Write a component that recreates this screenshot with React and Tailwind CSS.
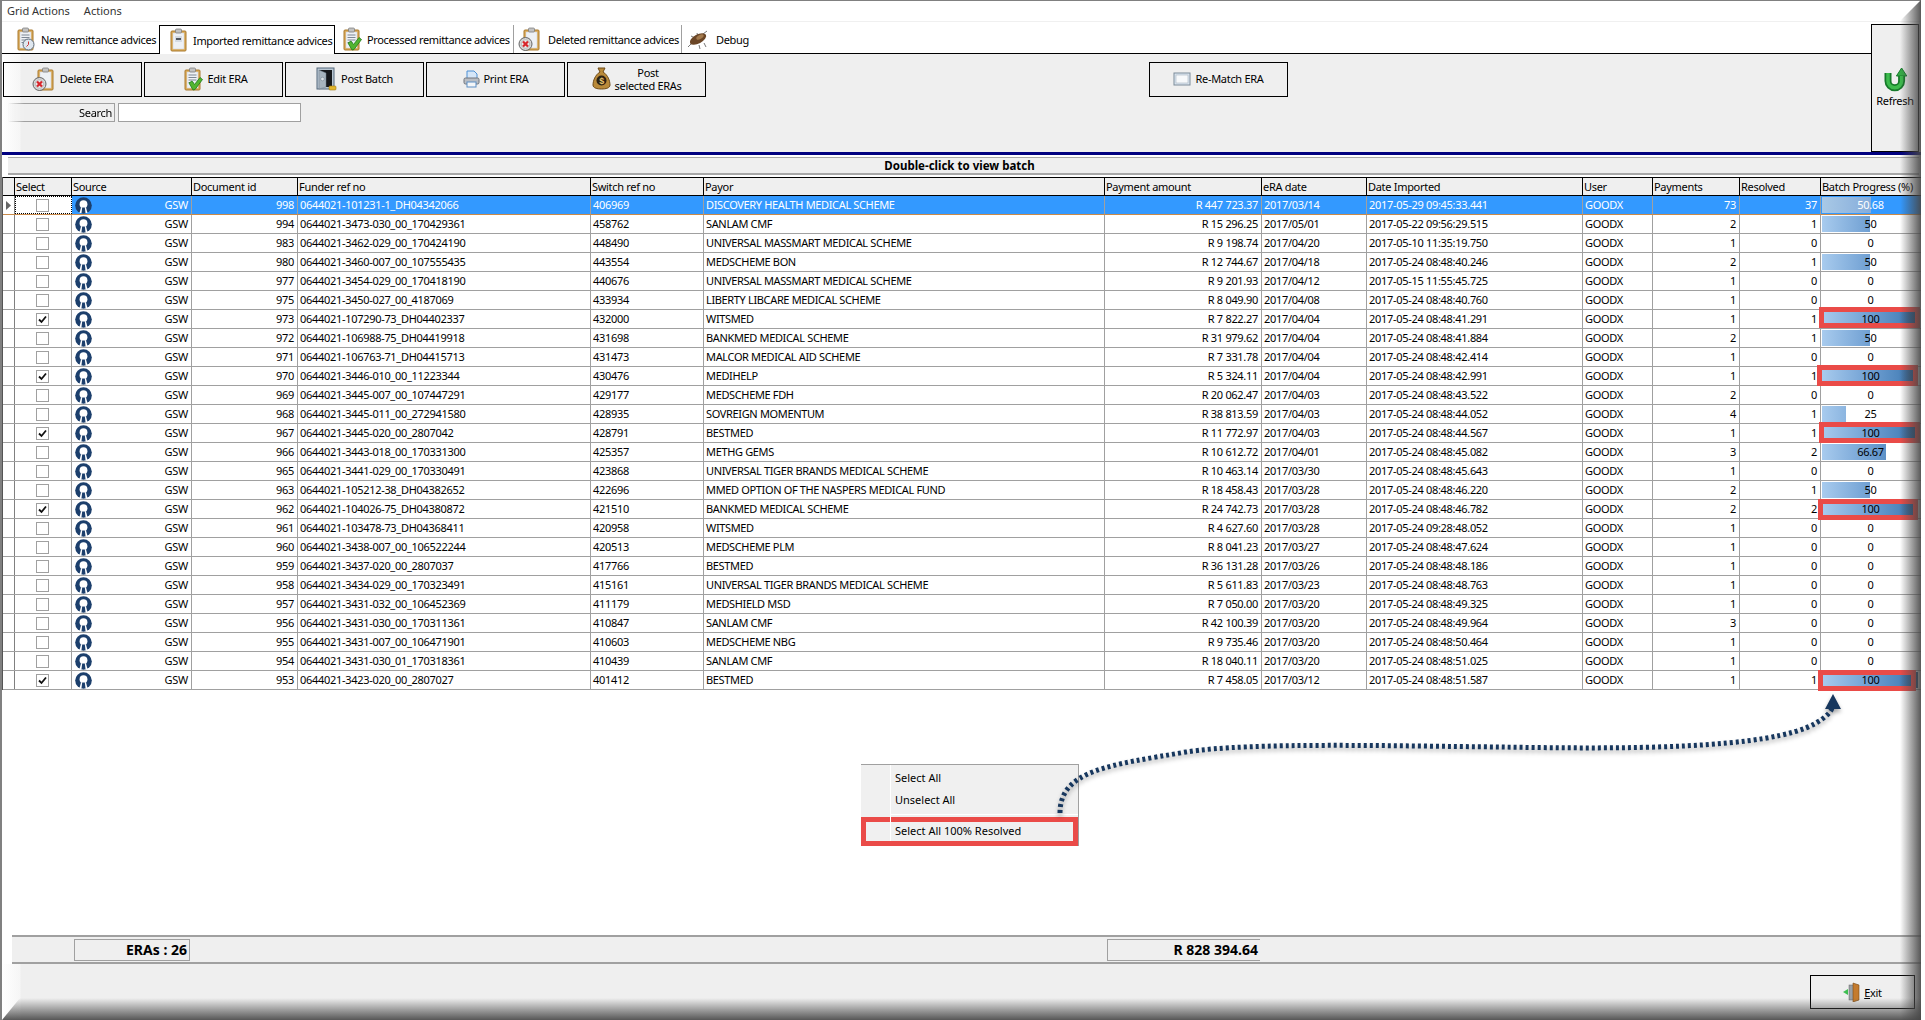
import React from "react";

const rows = [
  [998, "0644021-101231-1_DH04342066", 406969, "DISCOVERY HEALTH MEDICAL SCHEME", "R 447 723.37", "2017/03/14", "2017-05-29 09:45:33.441", 73, 37, 50.68],
  [994, "0644021-3473-030_00_170429361", 458762, "SANLAM CMF", "R 15 296.25", "2017/05/01", "2017-05-22 09:56:29.515", 2, 1, 50],
  [983, "0644021-3462-029_00_170424190", 448490, "UNIVERSAL MASSMART MEDICAL SCHEME", "R 9 198.74", "2017/04/20", "2017-05-10 11:35:19.750", 1, 0, 0],
  [980, "0644021-3460-007_00_107555435", 443554, "MEDSCHEME BON", "R 12 744.67", "2017/04/18", "2017-05-24 08:48:40.246", 2, 1, 50],
  [977, "0644021-3454-029_00_170418190", 440676, "UNIVERSAL MASSMART MEDICAL SCHEME", "R 9 201.93", "2017/04/12", "2017-05-15 11:55:45.725", 1, 0, 0],
  [975, "0644021-3450-027_00_4187069", 433934, "LIBERTY LIBCARE MEDICAL SCHEME", "R 8 049.90", "2017/04/08", "2017-05-24 08:48:40.760", 1, 0, 0],
  [973, "0644021-107290-73_DH04402337", 432000, "WITSMED", "R 7 822.27", "2017/04/04", "2017-05-24 08:48:41.291", 1, 1, 100],
  [972, "0644021-106988-75_DH04419918", 431698, "BANKMED MEDICAL SCHEME", "R 31 979.62", "2017/04/04", "2017-05-24 08:48:41.884", 2, 1, 50],
  [971, "0644021-106763-71_DH04415713", 431473, "MALCOR MEDICAL AID SCHEME", "R 7 331.78", "2017/04/04", "2017-05-24 08:48:42.414", 1, 0, 0],
  [970, "0644021-3446-010_00_11223344", 430476, "MEDIHELP", "R 5 324.11", "2017/04/04", "2017-05-24 08:48:42.991", 1, 1, 100],
  [969, "0644021-3445-007_00_107447291", 429177, "MEDSCHEME FDH", "R 20 062.47", "2017/04/03", "2017-05-24 08:48:43.522", 2, 0, 0],
  [968, "0644021-3445-011_00_272941580", 428935, "SOVREIGN MOMENTUM", "R 38 813.59", "2017/04/03", "2017-05-24 08:48:44.052", 4, 1, 25],
  [967, "0644021-3445-020_00_2807042", 428791, "BESTMED", "R 11 772.97", "2017/04/03", "2017-05-24 08:48:44.567", 1, 1, 100],
  [966, "0644021-3443-018_00_170331300", 425357, "METHG GEMS", "R 10 612.72", "2017/04/01", "2017-05-24 08:48:45.082", 3, 2, 66.67],
  [965, "0644021-3441-029_00_170330491", 423868, "UNIVERSAL TIGER BRANDS MEDICAL SCHEME", "R 10 463.14", "2017/03/30", "2017-05-24 08:48:45.643", 1, 0, 0],
  [963, "0644021-105212-38_DH04382652", 422696, "MMED OPTION OF THE NASPERS MEDICAL FUND", "R 18 458.43", "2017/03/28", "2017-05-24 08:48:46.220", 2, 1, 50],
  [962, "0644021-104026-75_DH04380872", 421510, "BANKMED MEDICAL SCHEME", "R 24 742.73", "2017/03/28", "2017-05-24 08:48:46.782", 2, 2, 100],
  [961, "0644021-103478-73_DH04368411", 420958, "WITSMED", "R 4 627.60", "2017/03/28", "2017-05-24 09:28:48.052", 1, 0, 0],
  [960, "0644021-3438-007_00_106522244", 420513, "MEDSCHEME PLM", "R 8 041.23", "2017/03/27", "2017-05-24 08:48:47.624", 1, 0, 0],
  [959, "0644021-3437-020_00_2807037", 417766, "BESTMED", "R 36 131.28", "2017/03/26", "2017-05-24 08:48:48.186", 1, 0, 0],
  [958, "0644021-3434-029_00_170323491", 415161, "UNIVERSAL TIGER BRANDS MEDICAL SCHEME", "R 5 611.83", "2017/03/23", "2017-05-24 08:48:48.763", 1, 0, 0],
  [957, "0644021-3431-032_00_106452369", 411179, "MEDSHIELD MSD", "R 7 050.00", "2017/03/20", "2017-05-24 08:48:49.325", 1, 0, 0],
  [956, "0644021-3431-030_00_170311361", 410847, "SANLAM CMF", "R 42 100.39", "2017/03/20", "2017-05-24 08:48:49.964", 3, 0, 0],
  [955, "0644021-3431-007_00_106471901", 410603, "MEDSCHEME NBG", "R 9 735.46", "2017/03/20", "2017-05-24 08:48:50.464", 1, 0, 0],
  [954, "0644021-3431-030_01_170318361", 410439, "SANLAM CMF", "R 18 040.11", "2017/03/20", "2017-05-24 08:48:51.025", 1, 0, 0],
  [953, "0644021-3423-020_00_2807027", 401412, "BESTMED", "R 7 458.05", "2017/03/12", "2017-05-24 08:48:51.587", 1, 1, 100],
];

const gridCols =
  "grid grid-cols-[12px_57px_120px_106px_293px_113px_401px_157px_105px_216px_70px_87px_81px_99px]";

const headers = ["", "Select", "Source", "Document id", "Funder ref no", "Switch ref no", "Payor", "Payment amount", "eRA date", "Date Imported", "User", "Payments", "Resolved", "Batch Progress (%)"];

const Clipboard = ({ size = 24, children }) => (
  <svg width={size} height={size} viewBox="0 0 24 24" className="shrink-0">
    <rect x="6" y="3" width="15" height="20" rx="1" fill="#dcab57" stroke="#a97b31" />
    <rect x="8" y="5" width="11" height="16" fill="#eef1f5" stroke="#c9ced6" strokeWidth="0.5" />
    <rect x="10.5" y="1" width="6" height="4" rx="1" fill="#c2c2c2" stroke="#777" strokeWidth="0.7" />
    {children}
  </svg>
);

const Lines = () => (
  <g stroke="#7d8794" strokeWidth="1">
    <path d="M9.5 8h8M9.5 10.5h8M9.5 13h8M9.5 15.5h5" />
  </g>
);

const Tick = () => (
  <path d="M10 16l3-2 2.5 3.5L21 10.5l2.5 2-7.5 10-2 .5z" fill="#52b52f" stroke="#1d7a1a" strokeWidth="0.8" />
);

const DeleteBadge = () => (
  <g>
    <circle cx="7.5" cy="17" r="6.5" fill="#d6d6d6" stroke="#666" />
    <circle cx="7.5" cy="17" r="4.2" fill="#e9e9e9" stroke="#999" strokeWidth="0.5" />
    <path d="M5 14.5l5 5M10 14.5l-5 5" stroke="#d8262c" strokeWidth="2.2" />
  </g>
);

const TabNewIcon = () => (
  <Clipboard>
    <Lines />
    <circle cx="16.5" cy="17.5" r="5.5" fill="#dfe7ef" stroke="#5d6b7a" />
    <path d="M16.5 14.5v3l-2 2" stroke="#c33" strokeWidth="1" fill="none" />
  </Clipboard>
);

const TabOkIcon = () => (
  <Clipboard>
    <rect x="10" y="8" width="7" height="6" fill="#d5dbe3" />
    <rect x="11" y="10" width="5" height="2" fill="#50565f" />
  </Clipboard>
);

const CheckClipboard = () => (
  <Clipboard>
    <Lines />
    <Tick />
  </Clipboard>
);

const DeleteClipboard = () => (
  <Clipboard>
    <DeleteBadge />
  </Clipboard>
);

const BugIcon = () => (
  <svg width="24" height="22" viewBox="0 0 24 22" className="shrink-0">
    <path d="M2 19L7 14M5 8l4 2M11 5l1 4M18 15l2 4M13 17l1 4M21 3l-4 3" stroke="#777" strokeWidth="1" fill="none" />
    <ellipse cx="12" cy="11" rx="9" ry="4.5" transform="rotate(-28 12 11)" fill="#6b4626" />
    <ellipse cx="14" cy="9" rx="4" ry="2" transform="rotate(-28 14 9)" fill="#a37a4d" />
  </svg>
);

const SafeIcon = () => (
  <svg width="21" height="24" viewBox="0 0 21 24" className="shrink-0">
    <rect x="1" y="1" width="17" height="21" fill="#b8c6d2" stroke="#55697c" />
    <rect x="3" y="3" width="13" height="17" fill="#16181c" />
    <path d="M3 3l7 3v14l-7 2z" fill="#a7b4bf" stroke="#6c7b88" strokeWidth="0.5" />
    <circle cx="6.5" cy="12" r="1.8" fill="#dfe5ea" stroke="#6c7b88" strokeWidth="0.5" />
    <rect x="13" y="19" width="7" height="4" rx="1" fill="#e3b62c" stroke="#9d7a14" strokeWidth="0.6" />
  </svg>
);

const PrinterIcon = () => (
  <svg width="17" height="18" viewBox="0 0 17 18" className="shrink-0">
    <path d="M4 1h7l3 3v6H4z" fill="#d5e6f8" stroke="#4d8fd4" />
    <rect x="1" y="8" width="15" height="6" rx="1.5" fill="#b9bdc3" stroke="#70757c" />
    <rect x="4" y="12" width="9" height="5" fill="#f4f6f8" stroke="#5d8fc6" />
  </svg>
);

const MoneyBagIcon = () => (
  <svg width="19" height="23" viewBox="0 0 19 23" className="shrink-0">
    <path d="M6 1l7 0-2 4c5 3 7 9 7 13 0 3-4 4-8.500 4S1 21 1 18c0-4 2-10 7-13z" fill="#b98a3a" stroke="#6e4a17" />
    <circle cx="9.500" cy="13.500" r="5" fill="#2b2114" />
    <text x="9.500" y="17" textAnchor="middle" fontSize="9" fontWeight="700" fill="#e8c36c" fontFamily="Liberation Sans, sans-serif">$</text>
  </svg>
);

const RematchIcon = () => (
  <svg width="18" height="14" viewBox="0 0 18 14" className="shrink-0">
    <rect x="1" y="1" width="16" height="12" fill="#dbe6f0" stroke="#7d8b99" />
    <rect x="3" y="3" width="12" height="8" fill="#f7f9fb" stroke="#a7b3bf" strokeWidth="0.6" />
  </svg>
);

const RefreshIcon = () => (
  <svg width="24" height="24" viewBox="0 0 24 24">
    <path d="M5 5v8a6.800 6.800 0 0 0 13.600 0V8" fill="none" stroke="#167a2a" strokeWidth="7" />
    <path d="M18.600 0l5.200 8H13.400z" fill="#35ad47" stroke="#167a2a" strokeWidth="1" />
    <path d="M5 5v8a6.800 6.800 0 0 0 13.600 0V8" fill="none" stroke="#3dbb4d" strokeWidth="3.500" />
  </svg>
);

const ExitIcon = () => (
  <svg width="19" height="20" viewBox="0 0 19 20" className="shrink-0">
    <path d="M0 10l5-3v6z" fill="#3fbf52" />
    <rect x="6" y="3" width="9" height="15" fill="#9aa0a6" stroke="#666" strokeWidth="0.5" />
    <path d="M10 1l6 2v15l-6 2z" fill="#c47b2e" stroke="#7a4b16" strokeWidth="0.6" />
  </svg>
);

const SourceIcon = () => (
  <svg width="17" height="17" viewBox="0 0 17 17">
    <circle cx="8.500" cy="8.500" r="8.300" fill="#1c3f6c" />
    <circle cx="8.500" cy="7.200" r="3.900" fill="#fff" />
    <path d="M6 10.500h5l1.500 5.500h-8z" fill="#fff" />
    <path d="M7.200 10.500h2.600l.7 5.500H6.500z" fill="#1c3f6c" />
  </svg>
);

const Tab = ({ icon, label, className, active }) => (
  <div
    className={`flex items-center shrink-0 ${className} ${
      active ? "h-[29px] -mb-px border border-b-0 border-black bg-white" : "h-[28px]"
    }`}
  >
    {icon}
    <span className="whitespace-nowrap tracking-[-0.35px]">{label}</span>
  </div>
);

const ToolButton = ({ icon, children, className = "" }) => (
  <div className={`flex w-[139px] h-[35px] shrink-0 items-center justify-center gap-[4px] border border-black pb-[2px] ${className}`}>
    {icon}
    <span className="text-center leading-[13px]">{children}</span>
  </div>
);

const Cell = ({ right, children, selected, className = "" }) => (
  <div
    className={`flex items-center overflow-hidden whitespace-nowrap border-r border-[#a0a0a0] pb-[2px] ${
      right ? "justify-end pr-[3px]" : "pl-[2px]"
    } ${selected ? "text-white" : ""} ${className}`}
  >
    {children}
  </div>
);

const ProgressCell = ({ value, selected }) => (
  <div className={`grid items-center justify-items-center ${selected ? "text-white" : ""}`}>
    <div className="col-start-1 row-start-1 justify-self-start ml-[1px] h-[16px] w-[96px] overflow-hidden">
      <div className="h-full overflow-hidden" style={{ width: `${value}%` }}>
        <div
          className={`h-full w-[96px] ${
            selected
              ? "bg-[linear-gradient(to_right,#a9c9e6,#86addb_50%,#4f86c4)]"
              : "bg-[linear-gradient(to_right,#a8cbee,#6f9fd2_50%,#4f86bd_80%,#1f4a78)]"
          }`}
        />
      </div>
    </div>
    <span className="col-start-1 row-start-1 relative pb-[2px]">{value}</span>
  </div>
);

const Row = ({ row, index }) => {
  const [id, funder, sw, payor, amount, eraDate, imported, payments, resolved, progress] = row;
  const selected = index === 0;
  const checked = progress === 100;
  return (
    <div
      className={`${gridCols} h-[19px] border-b ${
        selected ? "bg-[#3399ff] border-b-[#c98a4a]" : "border-[#a0a0a0]"
      }`}
    >
      <div className="flex items-center pl-[3px] border-r border-[#808080] bg-white">
        {selected && (
          <svg width="5" height="9" viewBox="0 0 5 9">
            <path d="M0 0l5 4.500L0 9z" fill="#666" />
          </svg>
        )}
      </div>
      <div
        className={`flex items-center justify-center pr-[2px] bg-white ${
          selected ? "border border-dotted border-black" : "border-r border-[#a0a0a0]"
        }`}
      >
        <div className="flex h-[13px] w-[13px] items-center justify-center border border-[#a0a0a0] bg-white">
          {checked && (
            <svg width="9" height="9" viewBox="0 0 9 9">
              <path d="M1 4.500l2.500 2.500L8 1.500" fill="none" stroke="#111" strokeWidth="1.800" />
            </svg>
          )}
        </div>
      </div>
      <div className={`flex items-center justify-between border-r border-[#a0a0a0] pl-[3px] pr-[3px] ${selected ? "text-white" : ""}`}>
        <SourceIcon />
        <span className="pb-[2px]">GSW</span>
      </div>
      <Cell right selected={selected}>{id}</Cell>
      <Cell selected={selected}>{funder}</Cell>
      <Cell selected={selected}>{sw}</Cell>
      <Cell selected={selected} className="tracking-[-0.35px]">{payor}</Cell>
      <Cell right selected={selected}>{amount}</Cell>
      <Cell selected={selected}>{eraDate}</Cell>
      <Cell selected={selected}>{imported}</Cell>
      <Cell selected={selected}>GOODX</Cell>
      <Cell right selected={selected}>{payments}</Cell>
      <Cell right selected={selected}>{resolved}</Cell>
      <ProgressCell value={progress} selected={selected} />
    </div>
  );
};

const RedBox = ({ className }) => (
  <div className={`absolute border-[5px] border-[#ea4b48] ${className}`} />
);

const ContextMenu = () => (
  <div className="absolute left-[861px] top-[764px] flex h-[82px] w-[218px] flex-col border-t border-r border-[#a0a0a0] bg-[#f0f0f0] tracking-normal">
    <div className="flex h-[22px] items-center pl-[34px] pt-[4px]">Select All</div>
    <div className="flex h-[22px] items-center pl-[34px] pt-[4px]">Unselect All</div>
    <div className="ml-[29px] mt-[6px] h-[1px] bg-white" />
    <div className="mt-[2px] flex h-[29px] items-center border-[5px] border-[#ea4b48] pl-[29px] pb-[3px]">
      Select All 100% Resolved
    </div>
    <div className="absolute bottom-[5px] left-[29px] top-0 w-px bg-white" />
  </div>
);

const DottedArrow = () => (
  <svg width="1925" height="1020" viewBox="0 0 1925 1020" className="absolute left-0 top-0 drop-shadow-[0_3px_2px_rgba(0,0,0,0.35)]">
    <path
      d="M1060 813C1060 770 1110 765 1186 752C1250 742 1394 746 1500 747C1620 749 1770 750 1816 723C1826 717 1831 712 1832 708"
      fill="none"
      stroke="#17375e"
      strokeWidth="5"
      strokeDasharray="3 3"
    />
    <path d="M1833 694l8 15h-16z" fill="#17375e" />
  </svg>
);

export default function App() {
  return (
    <div className="relative h-[1020px] w-[1925px] overflow-hidden bg-white font-['Noto_Sans','Liberation_Sans',sans-serif] text-[11px] leading-[13px] tracking-[-0.3px] text-black">
      <div className="flex h-full w-[1921px] flex-col border-l-2 border-t border-[#808080]">
        {/* menu */}
        <div className="flex h-[20px] shrink-0 items-center gap-[14px] pb-[1px] pl-[5px] tracking-normal text-[#333]">
          <span>Grid Actions</span>
          <span>Actions</span>
        </div>
        <div className="h-px shrink-0 bg-[#f0f0f0]" />

        {/* tabs + toolbar with the tall refresh button */}
        <div className="flex h-[130px] shrink-0 pr-[2px]">
          <div className="flex min-w-0 flex-1 flex-col">
            <div className="flex h-[32px] shrink-0 items-end border-b border-black">
              <Tab className="w-[157px] gap-[5px] pl-[10px]" icon={<TabNewIcon />} label="New remittance advices" />
              <Tab active className="w-[176px] gap-[4px] pl-[5px]" icon={<TabOkIcon />} label="Imported remittance advices" />
              <Tab className="w-[179px] gap-[5px] border-r border-[#a0a0a0] pl-[3px]" icon={<CheckClipboard />} label="Processed remittance advices" />
              <Tab className="w-[168px] gap-[6px] border-r border-[#a0a0a0] pl-[4px]" icon={<DeleteClipboard />} label="Deleted remittance advices" />
              <Tab className="w-[70px] gap-[6px] pl-[4px]" icon={<BugIcon />} label="Debug" />
            </div>
            <div className="flex-1 bg-[linear-gradient(to_right,#ffffff,#f6f6f6_18px,#efefef_19px)] pl-px pt-[8px]">
              <div className="flex gap-[2px]">
                <ToolButton icon={<DeleteClipboard />}>Delete ERA</ToolButton>
                <ToolButton icon={<CheckClipboard />}>Edit ERA</ToolButton>
                <ToolButton icon={<SafeIcon />}>Post Batch</ToolButton>
                <ToolButton icon={<PrinterIcon />}>Print ERA</ToolButton>
                <ToolButton icon={<MoneyBagIcon />}>
                  Post
                  <br />
                  selected ERAs
                </ToolButton>
                <ToolButton icon={<RematchIcon />} className="ml-[441px]">Re-Match ERA</ToolButton>
              </div>
              <div className="mt-[6px] flex h-[19px] gap-[3px] pl-[5px]">
                <div className="flex w-[107px] items-center justify-end border border-[#a0a0a0] bg-[#efefef] pb-px pr-[2px] [mask-image:linear-gradient(to_right,transparent,black_16px)]">
                  Search
                </div>
                <div className="w-[183px] border border-[#a0a0a0] bg-white" />
              </div>
            </div>
          </div>
          <div className="flex h-[128px] w-[48px] shrink-0 flex-col items-center justify-center gap-[2px] self-end border border-black bg-[#efefef] pb-[2px]">
            <RefreshIcon />
            <span>Refresh</span>
          </div>
        </div>

        {/* blue divider and caption */}
        <div className="h-[3px] shrink-0 bg-[#000080]" />
        <div className="h-[2px] shrink-0" />
        <div className="ml-[6px] mr-[2px] flex h-[18px] shrink-0 items-center justify-center border-b-2 border-t border-[#a8a8a8] bg-[#efefef] pr-[8px] text-[11.5px] font-bold tracking-normal">
          Double-click to view batch
        </div>
        <div className="h-[2px] shrink-0" />

        {/* grid */}
        <div className="shrink-0 border-l border-[#555]">
          <div className={`${gridCols} h-[19px] border-b border-t border-black bg-[#efefef]`}>
            {headers.map((title, i) => (
              <div key={i} className="flex items-center overflow-hidden whitespace-nowrap border-r border-black pl-px last:border-r-0">
                {title}
              </div>
            ))}
          </div>
          {rows.map((row, index) => (
            <Row key={row[0]} row={row} index={index} />
          ))}
        </div>

        <div className="flex-1" />

        {/* totals */}
        <div className="ml-[10px] flex h-[27px] shrink-0 items-center border-t-2 border-[#a0a0a0] bg-[#efefef]">
          <div className="ml-[62px] flex h-[22px] w-[116px] items-center justify-end border border-[#a0a0a0] pr-[2px] text-[14px] font-bold tracking-normal">
            ERAs : 26
          </div>
          <div className="ml-[917px] flex h-[22px] w-[153px] items-center justify-end border-y border-l border-[#a0a0a0] pr-[2px] text-[14px] font-bold tracking-normal">
            R 828 394.64
          </div>
        </div>
        <div className="ml-[10px] h-[2px] shrink-0 bg-[#a0a0a0]" />
        <div className="flex h-[56px] shrink-0 items-start justify-end bg-[linear-gradient(to_right,#ffffff,#f6f6f6_18px,#efefef_19px)] pr-[6px] pt-[11px]">
          <div className="flex h-[34px] w-[105px] items-center justify-center gap-[2px] border border-black">
            <ExitIcon />
            <span>
              <span className="underline">E</span>xit
            </span>
          </div>
        </div>
      </div>

      {/* annotations on top of the screenshot */}
      <RedBox className="left-[1819px] top-[307px] h-[21px] w-[101px]" />
      <RedBox className="left-[1817px] top-[365px] h-[21px] w-[101px]" />
      <RedBox className="left-[1819px] top-[422px] h-[21px] w-[101px]" />
      <RedBox className="left-[1818px] top-[499px] h-[21px] w-[100px]" />
      <RedBox className="left-[1818px] top-[670px] h-[21px] w-[98px]" />
      <ContextMenu />
      <DottedArrow />

      {/* edge shading of the picture */}
      <div className="pointer-events-none absolute right-[4px] top-0 h-[1020px] w-[21px] bg-[linear-gradient(to_right,rgba(70,70,70,0),rgba(70,70,70,0.9))] [clip-path:polygon(0_21px,100%_0,100%_100%,0_100%)]" />
      <div className="pointer-events-none absolute bottom-0 left-0 h-[22px] w-[1921px] bg-[linear-gradient(to_bottom,rgba(70,70,70,0),rgba(70,70,70,0.9))] [clip-path:polygon(20px_0,100%_0,100%_100%,2px_100%)]" />
    </div>
  );
}
